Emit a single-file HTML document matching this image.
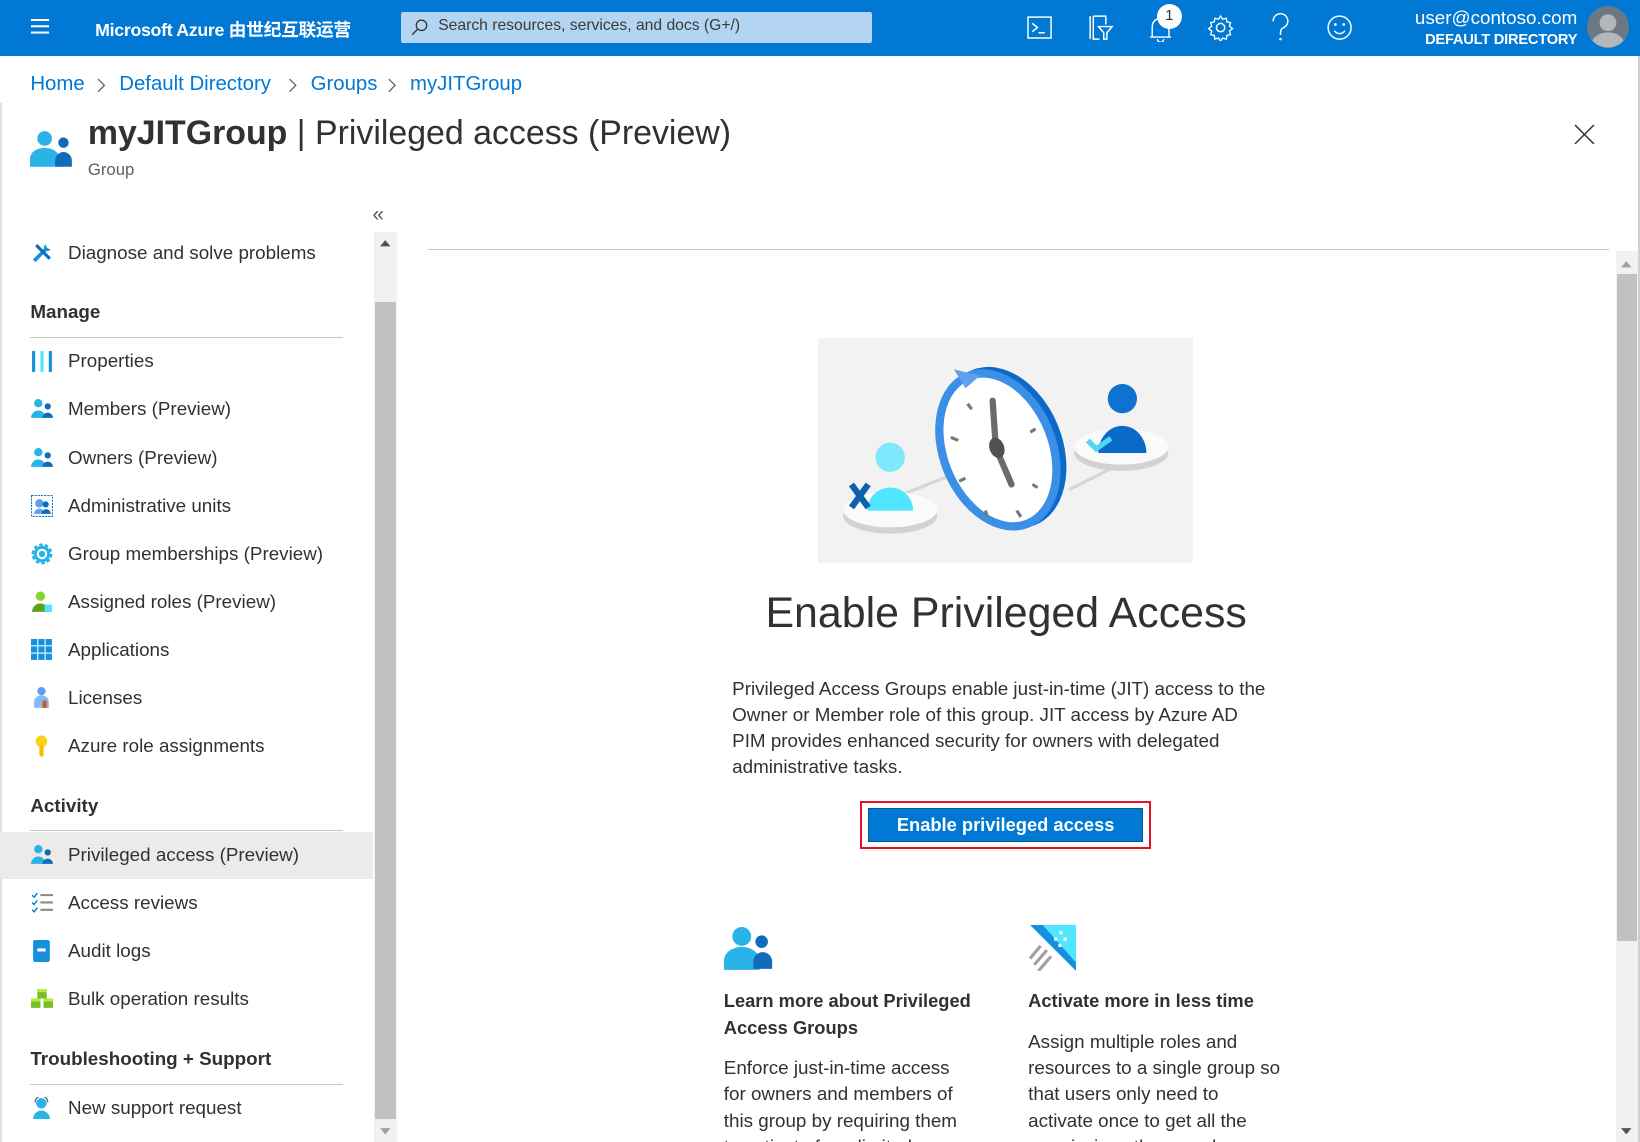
<!DOCTYPE html>
<html><head><meta charset="utf-8">
<style>
html,body{margin:0;padding:0;background:#fff;overflow:hidden}
body{width:1568px;height:1092px;zoom:1.04592;position:relative;font-family:"Liberation Sans","Noto Sans CJK SC",sans-serif;color:#323130}
.a{position:absolute;white-space:nowrap}
.top{position:absolute;left:0;top:0;width:1568px;height:54px;background:#0078d4}
.bc{color:#0078d4;font-size:19.5px;top:70px}
.side{font-size:18px;color:#323130}
.sh{font-size:18px;font-weight:bold;color:#323130}
.ln{position:absolute;left:29px;width:299px;height:1px;background:#c8c6c4}
.ic{position:absolute;left:30px;width:21px;height:21px}
p{margin:0}
</style></head><body>
<div class="top"></div>
<div class="a" style="left:30px;top:18px;width:17px;height:2px;background:#fff;box-shadow:0 6px 0 #fff,0 12px 0 #fff"></div>
<div class="a" style="left:91px;top:15px;color:#fff;font-weight:bold;font-size:17px;letter-spacing:-0.3px">Microsoft Azure 由世纪互联运营</div>
<div class="a" style="left:383px;top:11px;width:451px;height:30px;background:#b3d5f2;border-radius:2px"></div>
<svg class="a" style="left:392px;top:17px" width="18" height="18"><circle cx="11" cy="7" r="5" fill="none" stroke="#323130" stroke-width="1.2"/><path d="M7.5 10.5L2 16" stroke="#323130" stroke-width="1.3"/></svg>
<div class="a" style="left:419px;top:16px;font-size:15px;color:#3b3a39">Search resources, services, and docs (G+/)</div>
<svg class="a" style="left:982px;top:14px" width="24" height="24"><rect x="1" y="2" width="22" height="20" fill="none" stroke="#fff" stroke-width="1.4"/><path d="M5 8l5 4-5 4M11 17h6" fill="none" stroke="#fff" stroke-width="1.4"/></svg>
<svg class="a" style="left:1039px;top:13px" width="26" height="26"><path d="M3 2v22M6 2h12v8M6 2v22h6" fill="none" stroke="#fff" stroke-width="1.4"/><path d="M11 12h13l-5 6v6h-3v-6z" fill="none" stroke="#fff" stroke-width="1.4"/></svg>
<svg class="a" style="left:1097px;top:12px" width="26" height="28"><path d="M5 23V13a8 8 0 0 1 16 0v10zM3 23h20M10 25a3 3 0 0 0 6 0" fill="none" stroke="#fff" stroke-width="1.4"/></svg>
<div class="a" style="left:1106px;top:4px;width:24px;height:24px;border-radius:50%;background:#fff;color:#323130;font-size:14px;text-align:center;line-height:24px">1</div>
<svg class="a" style="left:1154px;top:13px" width="26" height="26" viewBox="0 0 26 26"><circle cx="13" cy="13" r="4" fill="none" stroke="#fff" stroke-width="1.4"/><path d="M13 2l2 3 3.5-1 .5 3.5 3.5.8-1 3.4 3 2.3-3 2.3 1 3.4-3.5.8-.5 3.5-3.5-1-2 3-2-3-3.5 1-.5-3.5-3.5-.8 1-3.4-3-2.3 3-2.3-1-3.4 3.5-.8.5-3.5 3.5 1z" fill="none" stroke="#fff" stroke-width="1.3"/></svg>
<svg class="a" style="left:1213px;top:12px" width="22" height="28"><path d="M4 8a7 7 0 1 1 10 6c-2 1-3 2-3 5v2" fill="none" stroke="#fff" stroke-width="1.4"/><circle cx="11" cy="25" r="1.2" fill="#fff"/></svg>
<svg class="a" style="left:1268px;top:12px" width="26" height="28"><circle cx="13" cy="14" r="11" fill="none" stroke="#fff" stroke-width="1.4"/><circle cx="9" cy="11" r="1.3" fill="#fff"/><circle cx="17" cy="11" r="1.3" fill="#fff"/><path d="M8 17a6 6 0 0 0 10 0" fill="none" stroke="#fff" stroke-width="1.4"/></svg>
<div class="a" style="right:60px;top:7px;color:#fff;font-size:18px;text-align:right">user@contoso.com</div>
<div class="a" style="right:60px;top:31px;color:#fff;font-size:14px;font-weight:bold;letter-spacing:-0.2px">DEFAULT DIRECTORY</div>
<svg class="a" style="left:1516px;top:5px" width="42" height="42"><circle cx="21" cy="21" r="20" fill="#6e7883"/><circle cx="21" cy="17" r="8" fill="#b3b7bc"/><path d="M6 34a16 12 0 0 1 30 0a20 20 0 0 1-30 0z" fill="#b3b7bc"/></svg>

<div class="a" style="left:0;top:98px;width:2px;height:994px;background:#e1e1e1"></div>
<div class="a" style="left:1566px;top:54px;width:2px;height:1038px;background:#d0d0d0"></div>
<div class="a bc" style="left:29px">Home</div>
<div class="a bc" style="left:114px">Default Directory</div>
<div class="a bc" style="left:297px">Groups</div>
<div class="a bc" style="left:392px">myJITGroup</div>
<svg class="a" style="left:92px;top:74px" width="300" height="16"><path d="M2 2l6 6-6 6M185 2l6 6-6 6M280 2l6 6-6 6" fill="none" stroke="#605e5c" stroke-width="1.2"/></svg>

<svg class="a" style="left:29px;top:122px" width="42" height="38"><circle cx="14" cy="10" r="7" fill="#28b4e6"/><path d="M0 37v-8a14 10 0 0 1 28 0v8z" fill="#28b4e6"/><circle cx="32" cy="14" r="5" fill="#0f6cbd"/><path d="M24 37v-6a8 8 0 0 1 16 0v6z" fill="#0f6cbd"/></svg>
<div class="a" style="left:84px;top:109px;font-size:32.4px;color:#323130"><b>myJITGroup</b> | Privileged access (Preview)</div>
<div class="a" style="left:84px;top:153px;font-size:16px;color:#605e5c">Group</div>
<svg class="a" style="left:1505px;top:119px" width="20" height="20"><path d="M1 1l18 18M19 1L1 19" stroke="#323130" stroke-width="1.4"/></svg>

<div class="a" style="left:356px;top:194px;font-size:20px;color:#605e5c">«</div>
<div class="a" style="left:358px;top:222px;width:22px;height:870px;background:#f1f1f1"></div>
<div class="a" style="left:359px;top:289px;width:20px;height:781px;background:#c1c1c1"></div>
<svg class="a" style="left:362px;top:228px" width="12" height="10"><path d="M1 8h10L6 2z" fill="#505050"/></svg>
<svg class="a" style="left:362px;top:1077px" width="12" height="10"><path d="M1 2h10L6 8z" fill="#a0a0a0"/></svg>

<div class="a" style="left:0;top:795px;width:357px;height:45px;background:#edebe9"></div>
<svg class="ic" style="top:231px" viewBox="0 0 21 21"><path d="M3 18L15 6" stroke="#1490df" stroke-width="3.5"/><path d="M14 2a5 5 0 0 0 5 5l-3 2-4-4z" fill="#1490df"/><path d="M5 3l13 13" stroke="#0f6cbd" stroke-width="3"/></svg>
<div class="a side" style="left:65px;top:231px">Diagnose and solve problems</div>
<div class="a sh" style="left:29px;top:288px">Manage</div><div class="ln" style="top:322px"></div>
<svg class="ic" style="top:335px" viewBox="0 0 21 21"><rect x="1" y="1" width="3" height="20" fill="#1490df"/><rect x="9" y="1" width="3" height="20" fill="#50e6ff"/><rect x="17" y="1" width="3" height="20" fill="#1490df"/></svg>
<div class="a side" style="left:65px;top:335px">Properties</div>
<svg class="ic" style="top:381px" viewBox="0 0 21 21"><circle cx="7" cy="5" r="4" fill="#28b4e6"/><path d="M0 19a7 7 0 0 1 14 0z" fill="#28b4e6"/><circle cx="16" cy="8" r="3" fill="#0f6cbd"/><path d="M11 19a5 5 0 0 1 10 0z" fill="#0f6cbd"/></svg>
<div class="a side" style="left:65px;top:381px">Members (Preview)</div>
<svg class="ic" style="top:427px" viewBox="0 0 21 21"><circle cx="7" cy="5" r="4" fill="#28b4e6"/><path d="M0 19a7 7 0 0 1 14 0z" fill="#28b4e6"/><circle cx="16" cy="8" r="3" fill="#0f6cbd"/><path d="M11 19a5 5 0 0 1 10 0z" fill="#0f6cbd"/></svg>
<div class="a side" style="left:65px;top:427px">Owners (Preview)</div>
<svg class="ic" style="top:473px" viewBox="0 0 21 21"><rect x="0.5" y="0.5" width="20" height="20" fill="none" stroke="#0078d4" stroke-dasharray="2 1"/><circle cx="8" cy="8" r="4" fill="#5ea0ef"/><path d="M3 18a5 5 0 0 1 10 0z" fill="#5ea0ef"/><circle cx="14" cy="9" r="3" fill="#0f6cbd"/><path d="M10 18a4 4 0 0 1 9 0z" fill="#0f6cbd"/></svg>
<div class="a side" style="left:65px;top:473px">Administrative units</div>
<svg class="ic" style="top:519px" viewBox="0 0 21 21"><circle cx="10.5" cy="10.5" r="8" fill="#28b4e6" stroke="#28b4e6" stroke-width="4" stroke-dasharray="3 2"/><circle cx="10.5" cy="10.5" r="4" fill="none" stroke="#fff" stroke-width="2"/></svg>
<div class="a side" style="left:65px;top:519px">Group memberships (Preview)</div>
<svg class="ic" style="top:565px" viewBox="0 0 21 21"><circle cx="9" cy="5" r="4.5" fill="#86d633"/><path d="M1 20a8 8 0 0 1 16 0z" fill="#5ea016"/><rect x="13" y="13" width="7" height="7" fill="#50e6ff"/></svg>
<div class="a side" style="left:65px;top:565px">Assigned roles (Preview)</div>
<svg class="ic" style="top:611px" viewBox="0 0 21 21"><g fill="#1490df"><rect x="0" y="0" width="6" height="6"/><rect x="7" y="0" width="6" height="6"/><rect x="14" y="0" width="6" height="6"/><rect x="0" y="7" width="6" height="6"/><rect x="7" y="7" width="6" height="6"/><rect x="14" y="7" width="6" height="6"/><rect x="0" y="14" width="6" height="6"/><rect x="7" y="14" width="6" height="6"/><rect x="14" y="14" width="6" height="6"/></g></svg>
<div class="a side" style="left:65px;top:611px">Applications</div>
<svg class="ic" style="top:657px" viewBox="0 0 21 21"><circle cx="10" cy="4" r="4" fill="#5ea0ef"/><path d="M3 20v-6a7 6 0 0 1 14 0v6z" fill="#83b9f9"/><rect x="11" y="13" width="4" height="7" fill="#d15a0b"/></svg>
<div class="a side" style="left:65px;top:657px">Licenses</div>
<svg class="ic" style="top:703px" viewBox="0 0 21 21"><circle cx="10" cy="6" r="5.5" fill="#fcd116"/><path d="M8 10h4v10l-2 1-2-2z" fill="#ffb900"/></svg>
<div class="a side" style="left:65px;top:703px">Azure role assignments</div>
<div class="a sh" style="left:29px;top:760px">Activity</div><div class="ln" style="top:794px"></div>
<svg class="ic" style="top:807px" viewBox="0 0 21 21"><circle cx="7" cy="5" r="4" fill="#28b4e6"/><path d="M0 19a7 7 0 0 1 14 0z" fill="#28b4e6"/><circle cx="16" cy="8" r="3" fill="#0f6cbd"/><path d="M11 19a5 5 0 0 1 10 0z" fill="#0f6cbd"/></svg>
<div class="a side" style="left:65px;top:807px">Privileged access (Preview)</div>
<svg class="ic" style="top:853px" viewBox="0 0 21 21"><path d="M1 3l2 2 3-4M1 10l2 2 3-4M1 17l2 2 3-4" fill="none" stroke="#0078d4" stroke-width="1.3"/><path d="M9 3h12M9 10h12M9 17h12" stroke="#8a8886" stroke-width="2"/></svg>
<div class="a side" style="left:65px;top:853px">Access reviews</div>
<svg class="ic" style="top:899px" viewBox="0 0 21 21"><rect x="2" y="0" width="16" height="21" rx="2" fill="#1490df"/><rect x="6" y="8" width="8" height="3" fill="#fff"/></svg>
<div class="a side" style="left:65px;top:899px">Audit logs</div>
<svg class="ic" style="top:945px" viewBox="0 0 21 21"><g fill="#76bc2d"><rect x="6" y="1" width="9" height="9"/><rect x="0" y="10" width="9" height="9"/><rect x="12" y="10" width="9" height="9"/></g><g fill="#b4ec36"><rect x="6" y="1" width="9" height="3"/><rect x="0" y="10" width="9" height="3"/><rect x="12" y="10" width="9" height="3"/></g></svg>
<div class="a side" style="left:65px;top:945px">Bulk operation results</div>
<div class="a sh" style="left:29px;top:1002px">Troubleshooting + Support</div><div class="ln" style="top:1036px"></div>
<svg class="ic" style="top:1049px" viewBox="0 0 21 21"><circle cx="10" cy="6" r="5" fill="#28b4e6"/><path d="M4 5a6 6 0 0 1 12 0" fill="none" stroke="#605e5c" stroke-width="1.2"/><path d="M2 21a8 8 0 0 1 16 0z" fill="#28b4e6"/></svg>
<div class="a side" style="left:65px;top:1049px">New support request</div>

<div class="a" style="left:409px;top:238px;width:1129px;height:1px;background:#c8c6c4"></div>
<div class="a" style="left:1545px;top:240px;width:21px;height:852px;background:#f1f1f1"></div>
<div class="a" style="left:1546px;top:262px;width:19px;height:638px;background:#c1c1c1"></div>
<svg class="a" style="left:1549px;top:248px" width="12" height="10"><path d="M1 8h10L6 2z" fill="#a0a0a0"/></svg>
<svg class="a" style="left:1549px;top:1077px" width="12" height="10"><path d="M1 2h10L6 8z" fill="#505050"/></svg>

<svg class="a" style="left:782px;top:323px" width="359" height="215" viewBox="0 0 359 215">
<rect width="359" height="215" fill="#f2f2f2"/>
<path d="M80 150L180 110M240 145L300 115" stroke="#d6d6d6" stroke-width="3"/>
<ellipse cx="69" cy="170" rx="45" ry="17" fill="#d2d2d2"/><ellipse cx="69" cy="164" rx="45" ry="17" fill="#fafafa"/>
<circle cx="69" cy="114" r="14" fill="#7ee8ff"/><path d="M47 165a22 22 0 0 1 44 0z" fill="#50e6ff"/>
<path d="M32 140l16 22M48 140l-16 22" stroke="#0f5fb3" stroke-width="6"/>
<ellipse cx="290" cy="110" rx="45" ry="17" fill="#d2d2d2"/><ellipse cx="290" cy="104" rx="45" ry="17" fill="#fafafa"/>
<circle cx="291" cy="58" r="14" fill="#0f72cf"/><path d="M268 110a23 26 0 0 1 46 0z" fill="#0b6ac8"/>
<path d="M258 98l8 8 14-10" fill="none" stroke="#4fd8f0" stroke-width="5"/>
<g transform="rotate(-22 172 107)"><ellipse cx="178" cy="107" rx="56" ry="80" fill="#0b6ac8"/><ellipse cx="172" cy="107" rx="56" ry="80" fill="#3b8fe6"/><ellipse cx="172" cy="107" rx="48" ry="72" fill="#fff"/></g>
<path d="M130 30l25 6-14 12z" fill="#5ea0ef"/>
<path d="M167 60l3 45" stroke="#6b6b6b" stroke-width="6" stroke-linecap="round"/>
<path d="M170 105l15 35" stroke="#6b6b6b" stroke-width="6" stroke-linecap="round"/>
<ellipse cx="171" cy="105" rx="7" ry="10" fill="#505050" transform="rotate(-20 171 105)"/>
<g stroke="#777" stroke-width="3"><path d="M143 63l4 5M127 95l7 3M135 137l6-3M160 165l2 6M190 165l4 6M205 140l5 3M203 90l5-3"/></g>
</svg>

<div class="a" style="left:562px;width:800px;text-align:center;top:563px;font-size:41px;color:#323130">Enable Privileged Access</div>
<div class="a" style="left:700px;top:646px;width:520px;font-size:18px;line-height:25px;white-space:normal;color:#323130">Privileged Access Groups enable just-in-time (JIT) access to the Owner or Member role of this group. JIT access by Azure AD PIM provides enhanced security for owners with delegated administrative tasks.</div>
<div class="a" style="left:822px;top:766px;width:275px;height:42px;border:2px solid #e81123"></div>
<div class="a" style="left:830px;top:773px;width:263px;height:32px;background:#0078d4;border:1px solid #005a9e;box-sizing:border-box;color:#fff;font-weight:bold;font-size:17.5px;text-align:center;line-height:30px">Enable privileged access</div>

<svg class="a" style="left:692px;top:885px" width="48" height="42" viewBox="0 0 48 42"><circle cx="17" cy="10" r="9" fill="#28b4e6"/><path d="M0 42v-9a17 13 0 0 1 34 0v9z" fill="#28b4e6"/><circle cx="36" cy="15" r="6" fill="#0f6cbd"/><path d="M28 41v-7a9 9 0 0 1 18 0v7z" fill="#0f6cbd"/></svg>
<svg class="a" style="left:983px;top:884px" width="46" height="44" viewBox="0 0 46 44"><path d="M2 0h44v44z" fill="#1490df"/><path d="M14 0h32v36z" fill="#50e6ff"/><g fill="#fff"><rect x="30" y="6" width="3" height="3"/><rect x="25" y="12" width="3" height="3"/><rect x="34" y="12" width="3" height="3"/><rect x="29" y="18" width="3" height="3"/></g><path d="M2 32l10-12M6 38l12-14M10 44l12-14" stroke="#a0a0a0" stroke-width="3"/></svg>
<div class="a" style="left:692px;top:945px;width:260px;font-size:17.5px;line-height:25px;font-weight:bold;white-space:normal;color:#323130">Learn more about Privileged Access Groups</div>
<div class="a" style="left:692px;top:1009px;width:240px;font-size:18px;line-height:25px;white-space:normal;color:#323130">Enforce just-in-time access for owners and members of this group by requiring them to activate for a limited</div>
<div class="a" style="left:983px;top:945px;font-size:17.5px;line-height:25px;font-weight:bold;color:#323130">Activate more in less time</div>
<div class="a" style="left:983px;top:984px;width:245px;font-size:18px;line-height:25px;white-space:normal;color:#323130">Assign multiple roles and resources to a single group so that users only need to activate once to get all the permissions they need</div>
</body></html>
